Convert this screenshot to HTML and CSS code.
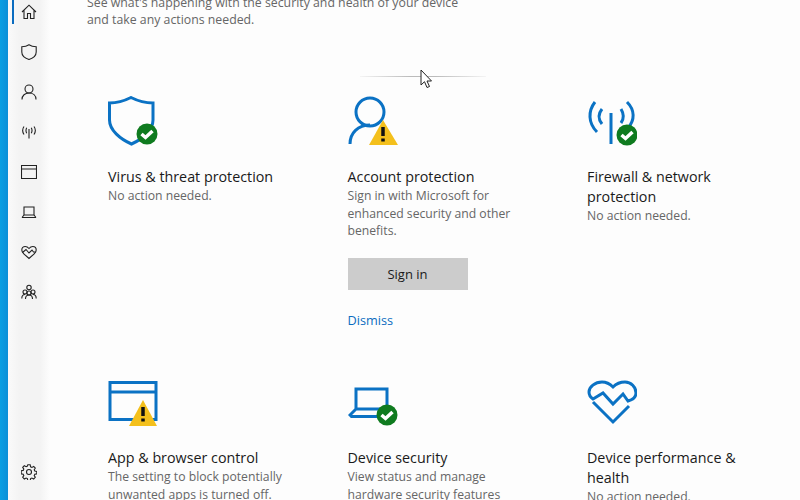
FILE: index.html
```html
<!DOCTYPE html>
<html lang="en">
<head>
  <meta charset="UTF-8" />
  <title>Windows Security</title>
  <link rel="stylesheet" href="styles.css">
</head>
<body>
  <div class="edge"></div>
  <nav class="sidebar">
    <ul class="nav-list">
      <li class="nav-item active">
        <svg viewBox="0 0 16 16"><path d="M1 8 8 1.200 15 8M3 6.200V14.500h3.500V9.500h3v5H13V6.200"/></svg>
      </li>
      <li class="nav-item">
        <svg viewBox="0 0 16 16"><path d="M.8 2.800C3.500 2.800 6 2.200 8 .8c2 1.400 4.500 2 7.200 2v5.200c0 3.500-3 6.200-7.200 7.500C3.800 14.200.8 11.500.8 8z"/></svg>
      </li>
      <li class="nav-item">
        <svg viewBox="0 0 16 16"><circle cx="8" cy="5" r="4"/><path d="M1 15.500C1 11.500 4 9 8 9s7 2.500 7 6.500"/></svg>
      </li>
      <li class="nav-item">
        <svg viewBox="0 0 16 16"><path d="M8 5v9.500M5.700 3.800C4.800 5.500 4.800 7.500 5.700 9.200M10.300 3.800c.9 1.700.9 3.700 0 5.400M3 2.500C1.300 5 1.300 8 3 10.500M13 2.500c1.700 2.500 1.700 5.500 0 8"/></svg>
      </li>
      <li class="nav-item">
        <svg viewBox="0 0 16 16"><path d="M.5 1.500h15v13H.5zM.5 5h15"/></svg>
      </li>
      <li class="nav-item">
        <svg viewBox="0 0 16 16"><path d="M3 3h10v8H3zM1 13.500h14"/><path d="M3 11 1 13.500M13 11l2 2.500"/></svg>
      </li>
      <li class="nav-item">
        <svg viewBox="0 0 16 16"><path d="M2.800 9.800C1.500 8.800.8 7.500.8 6c0-2 1.500-3.500 3.400-3.500C5.800 2.500 7 3.300 8 4.500c1-1.200 2.200-2 3.800-2 1.900 0 3.400 1.500 3.400 3.500 0 1.500-.7 2.800-2 3.800L8 14.500z"/><path d="M1.500 8.500 5 5.500l3 3.500 3-3 1.500 2h2"/></svg>
      </li>
      <li class="nav-item">
        <svg viewBox="0 0 16 16"><circle cx="8" cy="3.500" r="2.200"/><circle cx="4" cy="8" r="2"/><circle cx="12" cy="8" r="2"/><circle cx="8" cy="9" r="2"/><path d="M.8 14.500c0-2.500 1-4 3.200-4M15.200 14.500c0-2.500-1-4-3.200-4M4.500 15c0-2.500 1.300-4 3.500-4s3.500 1.500 3.500 4"/></svg>
      </li>
    </ul>
    <div class="nav-item settings">
      <svg viewBox="0 0 16 16"><circle cx="8" cy="8" r="2.500"/><path d="M6.800.8h2.400l.4 2 1.300.6 1.800-1 1.600 1.700-1.100 1.700.6 1.300 2 .4v2.400l-2 .4-.6 1.300 1.100 1.700-1.600 1.700-1.800-1-1.300.6-.4 2H6.800l-.4-2-1.300-.6-1.800 1-1.600-1.700 1.100-1.700-.6-1.300-2-.4V6.800l2-.4.6-1.300-1.100-1.700 1.600-1.700 1.800 1 1.300-.6z"/></svg>
    </div>
  </nav>

  <main class="content">
    <p class="intro">See what's happening with the security and health of your device<br>and take any actions needed.</p>

    <div class="grid">
      <section class="card">
        <div class="card-icon">
          <svg viewBox="0 0 50 50"><path class="line" d="M1.500 7C9 7 16 5 23 1.500 30 5 37 7 45 7v17C45 34 35 43 23.500 48 12 43 1.500 34 1.500 24z"/><circle class="ok" cx="39" cy="38" r="10.500"/><path class="tick" d="m33.500 38 4 3.500 7-6.500"/></svg>
        </div>
        <h3>Virus &amp; threat protection</h3>
        <p>No action needed.</p>
      </section>

      <section class="card">
        <div class="card-icon">
          <svg viewBox="0 0 50 50"><circle class="line" cx="22" cy="16" r="14"/><path class="line" d="M2 48c0-11 8-19 20-19"/><path class="warn" d="M35 24 50 49H21z"/><path class="mark" d="M35 31v9M35 42.500v3"/></svg>
        </div>
        <h3>Account protection</h3>
        <p>Sign in with Microsoft for<br>enhanced security and other<br>benefits.</p>
        <button class="signin">Sign in</button>
        <a class="dismiss" href="#">Dismiss</a>
      </section>

      <section class="card">
        <div class="card-icon">
          <svg viewBox="0 0 50 50"><path class="line" d="M24 17v31M15 13c-4 5-4 10 0 15M34 13c3 5 3 10 0 14M8 6C1 15 1 27 10 36M40 6c8 8 8 18 1 26"/><circle class="ok" cx="40" cy="39" r="10.500"/><path class="tick" d="m34.500 39 4 3.500 7-6.500"/></svg>
        </div>
        <h3>Firewall &amp; network<br>protection</h3>
        <p>No action needed.</p>
      </section>

      <section class="card">
        <div class="card-icon">
          <svg viewBox="0 0 50 50"><path class="line" d="M2 2.500h46v37H2zM2 12h46"/><path class="warn" d="M35 20 49 46H21z"/><path class="mark" d="M35 27v9M35 38.500v3"/></svg>
        </div>
        <h3>App &amp; browser control</h3>
        <p>The setting to block potentially<br>unwanted apps is turned off.</p>
      </section>

      <section class="card">
        <div class="card-icon">
          <svg viewBox="0 0 50 50"><path class="line" d="M8 9h31v20H8zM8 29l-6 6 1.500 1.500H32"/><circle class="ok" cx="39" cy="35" r="10.500"/><path class="tick" d="m33.500 35 4 3.500 7-6.500"/></svg>
        </div>
        <h3>Device security</h3>
        <p>View status and manage<br>hardware security features</p>
      </section>

      <section class="card">
        <div class="card-icon">
          <svg viewBox="0 0 50 50"><path class="line" d="M6 19C3 17 2 15 2 12 2 7 8 2 15 2c4 0 8 2 11 5 3-3 7-5 12-5 6 0 11 5 11 11 0 5-4 7-8 8l-5-7-10 10-10-11z"/><path class="line" d="m6 22 20 20 16-16"/></svg>
        </div>
        <h3>Device performance &amp;<br>health</h3>
        <p>No action needed.</p>
      </section>
    </div>
  </main>

  <div class="drag-line"></div>
  <svg class="cursor" viewBox="0 0 12 20"><path d="M1 1v15l3.500-3.300L7 18.500l2.500-1-2.500-5.500h4.500z"/></svg>
</body>
</html>
```

FILE: styles.css
```css
* { box-sizing: border-box; }

html, body {
  height: 100%;
}

body {
  margin: 0;
  display: flex;
  height: 500px;
  overflow: hidden;
  background-color: #fff;
  font-family: 'Open Sans', 'Noto Sans', sans-serif;
  color: #666;
}

.edge {
  flex: 0 0 8px;
  background: linear-gradient(to right, #0a9fe3, #0b8fd8);
}

.sidebar {
  flex: 0 0 42px;
  display: flex;
  flex-direction: column;
  background: linear-gradient(to right, #fafafa, #f3f3f3 30%, #f3f3f3 75%, #fdfdfd);
}

.nav-list {
  list-style-type: none;
  margin: -8px 0 0;
  padding: 0;
}

.nav-item {
  position: relative;
  height: 40px;
  padding-left: 13px;
  display: flex;
  align-items: center;
}

.nav-item svg {
  width: 16px;
  height: 16px;
  fill: none;
  stroke: #222;
  stroke-width: 1.100;
}

.active::before {
  content: "";
  position: absolute;
  left: 4px;
  top: 8px;
  bottom: 8px;
  width: 2px;
  background-color: #0a6cc0;
}

.settings {
  margin-top: auto;
  margin-bottom: 8px;
}

.content {
  flex-grow: 1;
  padding-left: 37px;
  background-color: #fdfdfd;
}

.intro {
  margin: -6px 0 0;
  font-size: 12.300px;
  line-height: 17px;
  color: #666;
}

.grid {
  display: grid;
  grid-template-columns: repeat(3, 239.500px);
  grid-template-rows: 284px auto;
  margin-top: 68px;
  padding-left: 21px;
}

.card-icon {
  height: 50px;
  margin-bottom: 21px;
}

.card:nth-child(n+4) .card-icon {
  margin-bottom: 18px;
}

.card-icon svg {
  width: 50px;
  height: 50px;
  display: block;
}

.line {
  fill: none;
  stroke: #0b72c4;
  stroke-width: 3;
}

.ok { fill: #0f7b1f; }

.tick {
  fill: none;
  stroke: #fff;
  stroke-width: 3.500;
}

.warn { fill: #f4c01c; }

.mark {
  fill: none;
  stroke: #111;
  stroke-width: 3.500;
}

.card h3 {
  margin: 0;
  font-size: 14.300px;
  font-weight: 400;
  line-height: 20px;
  color: #1a1a1a;
}

.card p {
  margin: 0;
  font-size: 12.200px;
  line-height: 17.500px;
  color: #666;
}

.signin {
  display: block;
  width: 120px;
  height: 32px;
  margin-top: 18px;
  border: none;
  background-color: #ccc;
  font-family: inherit;
  font-size: 13px;
  color: #1a1a1a;
}

.dismiss {
  display: inline-block;
  margin-top: 21px;
  font-size: 12.700px;
  color: #0a6cc0;
  text-decoration: none;
}

.drag-line {
  position: absolute;
  left: 360px;
  top: 76px;
  width: 126px;
  height: 1px;
  background: linear-gradient(to right, #f4f4f4, #bbb 40%, #bbb 60%, #f4f4f4);
}

.cursor {
  position: absolute;
  left: 420px;
  top: 69px;
  width: 12px;
  height: 20px;
  fill: #fff;
  stroke: #222;
  stroke-width: 1;
}
```
